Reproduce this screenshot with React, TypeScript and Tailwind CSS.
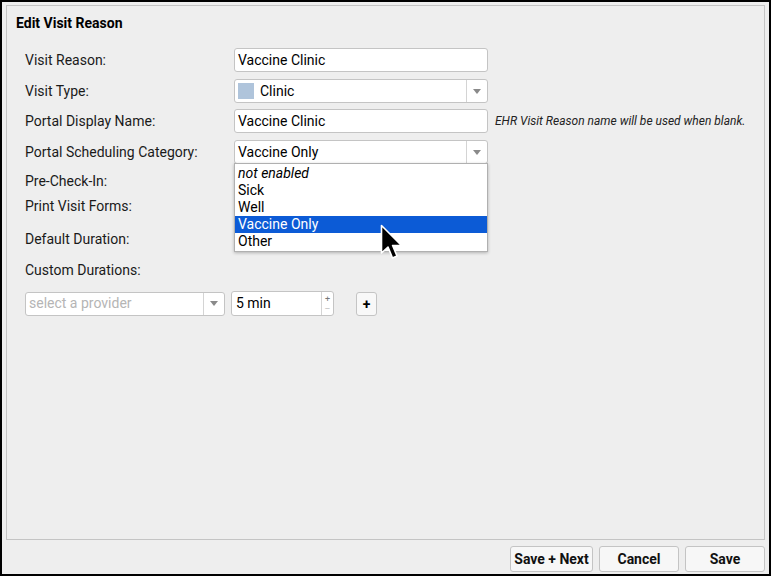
import { useState } from "react";

const categories = ["not enabled", "Sick", "Well", "Vaccine Only", "Other"];

function Caret() {
  return (
    <svg width="8" height="5" viewBox="0 0 8 5">
      <path d="M0 0 L8 0 L4 5 Z" fill="#8a8a8a" />
    </svg>
  );
}

function TextBox({ value }: { value: string }) {
  return (
    <div className="h-[24px] w-[254px] rounded-[3px] border border-[#c4c4c4] bg-white px-[3px] flex items-center text-[14px] text-black">
      {value}
    </div>
  );
}

function SelectBox({ children, width = "w-[254px]", muted = false }: { children: React.ReactNode; width?: string; muted?: boolean }) {
  return (
    <div className={`h-[24px] ${width} rounded-[3px] border border-[#c4c4c4] bg-white flex items-stretch text-[14px] ${muted ? "text-[#b5b5b5]" : "text-black"}`}>
      <div className="flex-1 flex items-center px-[3px] min-w-0">{children}</div>
      <div className="w-[21px] border-l border-[#d4d4d4] flex items-center justify-center">
        <Caret />
      </div>
    </div>
  );
}

function Pointer() {
  return (
    <svg width="24" height="38" viewBox="0 0 24 38" className="absolute left-[378px] top-[222px] pointer-events-none">
      <path
        d="M1.5 1.5 L1.5 29 L8 23 L12.5 34 L17 32 L12.6 21.5 L21.5 21.5 Z"
        fill="#000"
        stroke="#fff"
        strokeWidth="1.6"
        strokeLinejoin="round"
      />
    </svg>
  );
}

function Label({ children, className = "" }: { children: React.ReactNode; className?: string }) {
  return <div className={`w-[209px] shrink-0 text-[14px] text-[#1a1a1a] ${className}`}>{children}</div>;
}

export default function App() {
  const [category] = useState("Vaccine Only");

  return (
    <div
      className="relative w-[771px] h-[576px] border-2 border-black bg-[#eeeeee] flex flex-col"
      style={{ fontFamily: "Roboto, 'Liberation Sans', sans-serif" }}
    >
      <div className="ml-[4px] mr-[4px] mt-[3px] h-[535px] border border-[#c4c4c4] flex flex-col">
        <div className="pl-[9px] pt-[9px] h-[32px] text-[14px] font-bold text-black leading-[16px]">Edit Visit Reason</div>

        <div className="pl-[18px] pt-[10px] flex flex-col">
          <div className="flex items-center h-[24px]">
            <Label>Visit Reason:</Label>
            <TextBox value="Vaccine Clinic" />
          </div>
          <div className="flex items-center h-[24px] mt-[7px]">
            <Label>Visit Type:</Label>
            <SelectBox>
              <span className="w-[16px] h-[16px] bg-[#afc4db] mr-[6px] shrink-0" />
              Clinic
            </SelectBox>
          </div>
          <div className="flex items-center h-[24px] mt-[6px]">
            <Label>Portal Display Name:</Label>
            <TextBox value="Vaccine Clinic" />
            <span className="ml-[7px] text-[12px] italic text-[#222]">EHR Visit Reason name will be used when blank.</span>
          </div>
          <div className="flex items-center h-[24px] mt-[7px]">
            <Label>Portal Scheduling Category:</Label>
            <SelectBox>{category}</SelectBox>
          </div>
          <div className="flex items-center h-[20px] mt-[7px]">
            <Label>Pre-Check-In:</Label>
          </div>
          <div className="flex items-center h-[20px] mt-[5px]">
            <Label>Print Visit Forms:</Label>
          </div>
          <div className="flex items-center h-[24px] mt-[11px]">
            <Label>Default Duration:</Label>
            <div className="h-[24px] w-[117px] rounded-[3px] border border-[#c4c4c4] bg-white" />
          </div>
          <div className="flex items-center h-[20px] mt-[9px]">
            <Label>Custom Durations:</Label>
          </div>
          <div className="flex items-center h-[25px] mt-[11px]">
            <SelectBox width="w-[200px]" muted>
              select a provider
            </SelectBox>
            <div className="ml-[6px] h-[25px] w-[103px] rounded-[3px] border border-[#c4c4c4] bg-white flex items-stretch text-[14px] text-black">
              <div className="flex-1 flex items-center px-[4px]">5 min</div>
              <div className="w-[12px] border-l border-[#d4d4d4] flex flex-col items-center justify-center text-[#777] text-[9px] leading-[10px]">
                <span>+</span>
                <span className="text-[#bbb]">–</span>
              </div>
            </div>
            <button className="ml-[22px] h-[24px] w-[21px] rounded-[3px] border border-[#c4c4c4] bg-[#f8f8f8] text-[14px] font-bold leading-none flex items-center justify-center text-black">
              +
            </button>
          </div>
        </div>
      </div>

      <div className="flex justify-end gap-[6px] mr-[4px] mt-[6px]">
        <button className="h-[26px] w-[83px] rounded-[3px] border border-[#c4c4c4] bg-[#f7f7f7] text-[14px] font-bold text-[#111]">Save + Next</button>
        <button className="h-[26px] w-[80px] rounded-[3px] border border-[#c4c4c4] bg-[#f7f7f7] text-[14px] font-bold text-[#111]">Cancel</button>
        <button className="h-[26px] w-[80px] rounded-[3px] border border-[#c4c4c4] bg-[#f7f7f7] text-[14px] font-bold text-[#111]">Save</button>
      </div>

      <div className="absolute left-[232px] top-[161px] w-[254px] border border-[#b0b0b0] bg-white shadow-[0_1px_3px_rgba(0,0,0,0.25)] py-[1px] text-[14px] leading-[17px] text-black">
        {categories.map((c) => (
          <div
            key={c}
            className={`h-[17px] px-[3px] ${c === category ? "bg-[#0c5bd6] text-white" : ""} ${c === "not enabled" ? "italic" : ""}`}
          >
            {c}
          </div>
        ))}
      </div>

      <Pointer />
    </div>
  );
}
